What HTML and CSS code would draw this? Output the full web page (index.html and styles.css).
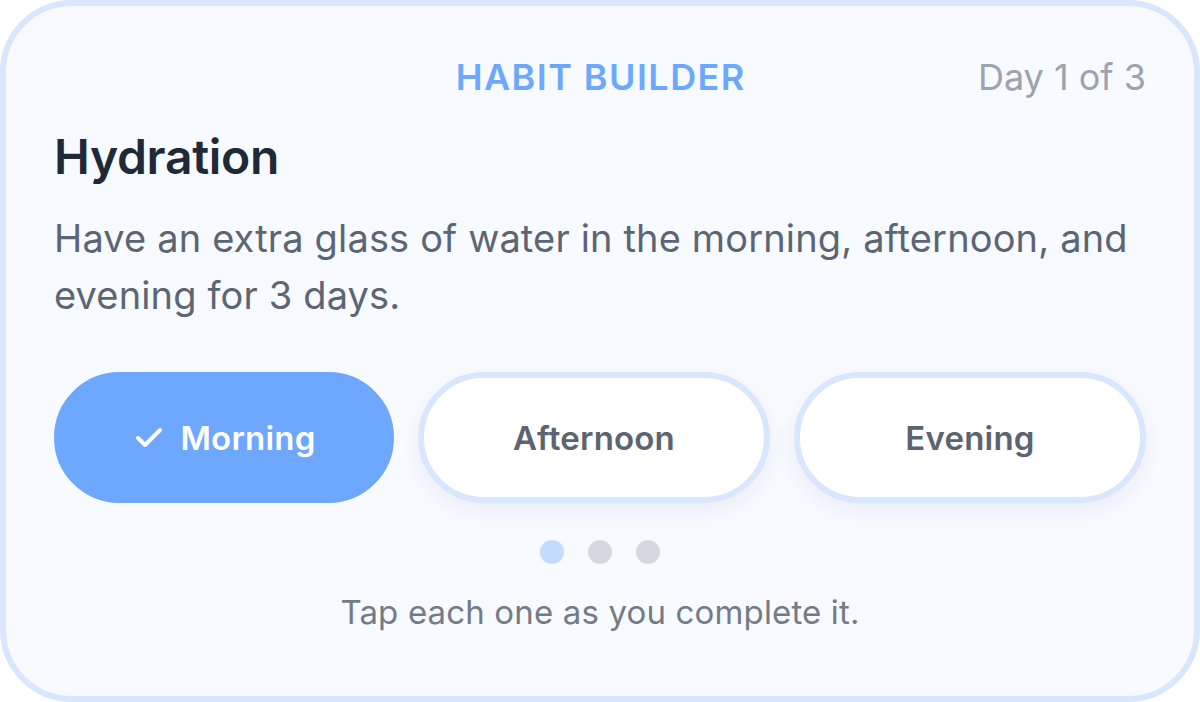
FILE: index.html
```html
<!DOCTYPE html>
<html lang="en">
<head>
<meta charset="utf-8">
<title>Habit Builder</title>
<link rel="stylesheet" href="styles.css">
</head>
<body>
<main class="card">
  <header class="header">
    <span class="spacer"></span>
    <span class="eyebrow">HABIT BUILDER</span>
    <span class="day">Day 1 of 3</span>
  </header>
  <h1 class="title">Hydration</h1>
  <p class="desc">Have an extra glass of water in the morning, afternoon, and evening for 3 days.</p>
  <div class="choices">
    <button class="choice choice-done" type="button">
      <svg class="check" viewBox="0 0 28 21" width="28" height="21" aria-hidden="true"><path d="M3 11 L10 18 L25 3" fill="none" stroke="#ffffff" stroke-width="4" stroke-linecap="round" stroke-linejoin="round"/></svg>
      <span>Morning</span>
    </button>
    <button class="choice" type="button"><span>Afternoon</span></button>
    <button class="choice" type="button"><span>Evening</span></button>
  </div>
  <div class="dots">
    <span class="dot dot-active"></span>
    <span class="dot"></span>
    <span class="dot"></span>
  </div>
  <p class="hint">Tap each one as you complete it.</p>
</main>
</body>
</html>
```

FILE: styles.css
```css
* { box-sizing: border-box; }
html, body { margin: 0; padding: 0; }
body {
  width: 1200px;
  height: 702px;
  background: #ffffff;
  font-family: Inter, "Noto Sans", "Liberation Sans", sans-serif;
}
.card {
  width: 1200px;
  height: 702px;
  border: 6px solid #d8e7fe;
  border-radius: 72px;
  background: #f7faff;
  padding: 48px 48px 0 48px;
  display: flex;
  flex-direction: column;
}
.header {
  display: grid;
  grid-template-columns: 1fr auto 1fr;
  align-items: center;
  height: 46px;
  line-height: 46px;
}
.eyebrow {
  font-size: 36px;
  font-weight: 600;
  letter-spacing: 0.04em;
  color: #6ea8fe;
  padding-left: 0.04em;
}
.day {
  justify-self: end;
  font-size: 36px;
  font-weight: 400;
  color: #9ca3af;
}
.title {
  margin: 28px 0 0 0;
  font-size: 48px;
  line-height: 58px;
  font-weight: 600;
  letter-spacing: -0.3px;
  color: #1f2937;
}
.desc {
  margin: 24px 0 0 0;
  font-size: 38px;
  line-height: 57px;
  font-weight: 400;
  letter-spacing: 0.15px;
  color: #5c6574;
}
.choices {
  margin-top: 48px;
  display: flex;
  gap: 24px;
  align-items: center;
}
.choice {
  flex: 1 1 0;
  height: 131px;
  border-radius: 66px;
  border: 6px solid #d8e7fe;
  background: #ffffff;
  box-shadow: 0 8px 22px rgba(30, 50, 90, 0.06);
  display: flex;
  align-items: center;
  justify-content: center;
  gap: 17px;
  font-family: Inter, "Noto Sans", "Liberation Sans", sans-serif;
  font-size: 33px;
  font-weight: 600;
  letter-spacing: 0.2px;
  color: #5c6470;
  padding: 0;
}
.choice-done {
  flex: 0 0 340px;
  background: #6ea8fe;
  border-color: #6ea8fe;
  box-shadow: none;
  color: #ffffff;
}
.check { display: block; margin-left: 3px; }
.dots {
  margin-top: 37px;
  display: flex;
  justify-content: center;
  gap: 24px;
}
.dot {
  width: 24px;
  height: 24px;
  border-radius: 50%;
  background: #d5d8de;
}
.dot-active { background: #c2dafe; }
.hint {
  margin: 25px 0 0 0;
  text-align: center;
  font-size: 33px;
  line-height: 46px;
  letter-spacing: 0.15px;
  color: #747b87;
}
```
